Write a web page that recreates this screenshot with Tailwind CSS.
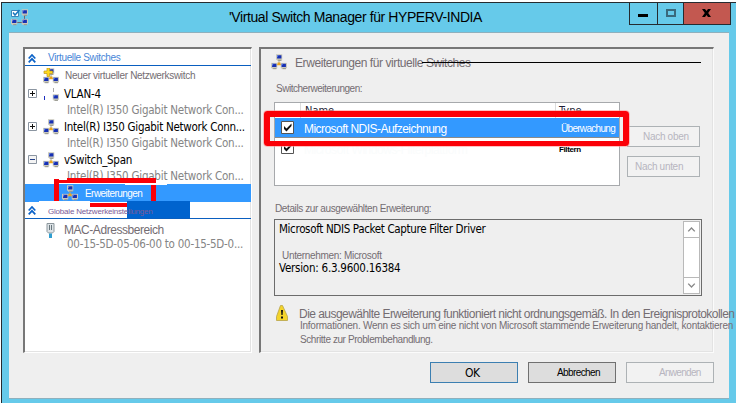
<!DOCTYPE html>
<html lang="de">
<head>
<meta charset="utf-8">
<title>Virtual Switch Manager</title>
<script src="https://cdn.jsdelivr.net/npm/@tailwindcss/browser@4"></script>
</head>
<body class="w-[736px] h-[403px] overflow-hidden bg-white font-['Liberation_Sans',Arial,sans-serif] text-[#746d72] whitespace-nowrap">
<svg class="hidden">
  <defs>
    <symbol id="pc" viewBox="0 0 6 6"><path fill="#c9c8bd" d="M0 0h6v5H0zM1 5h4v1H1z"/><path fill="#1730b4" d="M1 1h4v3H1z"/><path fill="#6a8df0" d="M1 1h1.500L1 3z"/><path fill="#8e8f86" d="M2 5h3v1H2z"/></symbol>
    <symbol id="net" viewBox="0 0 16 16"><path d="M8 6v4" stroke="#a3a89c" fill="none"/><path d="M5.500 10.500h5" stroke="#eba51c" stroke-width="1.500"/><path d="M6.500 8.500h3v1.500h-3z" fill="#eba51c"/><use href="#pc" x="5" y="0" width="6.500" height="7"/><use href="#pc" x="0" y="8.500" width="6.500" height="7"/><use href="#pc" x="9.500" y="8.500" width="6.500" height="7"/></symbol>
    <symbol id="chev" viewBox="0 0 8 9"><path d="M.7 4.500L4 1l3.300 3.500M.7 8.300L4 4.800l3.300 3.500" stroke="#0a62c8" stroke-width="1.700" fill="none"/></symbol>
    <symbol id="check" viewBox="0 0 13 13"><path d="M.5.5h12v12H.5z" fill="#fff" stroke="#555"/><path d="M3 5v3l2.500 2.500L10.500 5V2.500L5.500 7.500z" fill="#111"/></symbol>
    <symbol id="plus" viewBox="0 0 9 9"><path d="M.5.5h8v8h-8z" fill="#fff" stroke="#8b95a1"/><path d="M2 4.500h5M4.500 2v5" stroke="#111"/></symbol>
    <symbol id="minus" viewBox="0 0 9 9"><path d="M.5.5h8v8h-8z" fill="#f4f4f4" stroke="#8b95a1"/><path d="M2 4.500h5" stroke="#24408a"/></symbol>
  </defs>
</svg>
<div class="relative mt-[2px] ml-px w-[735px] h-[401px] border-t border-l border-[#252b30] bg-[#66caea]">
  <!-- title bar -->
  <header class="flex h-[29px] items-start">
    <svg class="ml-[9px] mt-[6px] w-[17px] h-[17px] shrink-0" viewBox="0 0 17 17"><path d="M13.500 5v6M5 13.500h6" stroke="#667" fill="none"/><path d="M.5 1.500h7v6h-7z" fill="#fff" stroke="#3b87b9"/><path d="M2 3.500l2 2.500 4.500-5" fill="none" stroke="#1676bd" stroke-width="1.500"/><use href="#pc" x="10.500" y="0" width="6.500" height="7"/><use href="#pc" x="0" y="9.500" width="6.500" height="7"/><use href="#pc" x="10.500" y="9.500" width="6.500" height="7"/></svg>
    <h1 class="ml-[201px] mt-[5px] w-[400px] text-[14px] leading-[18px] tracking-[-0.4px] text-black">'Virtual Switch Manager für HYPERV-INDIA</h1>
    <div class="flex h-[22px] w-[102px] shrink-0 border border-t-0 border-[#252b30]">
      <div class="w-[28px] border-r border-[#252b30] pl-[8px] pt-[11px]"><div class="h-[3px] w-[10px] bg-black"></div></div>
      <div class="w-[26px] border-r border-[#252b30] pl-[8px] pt-[6px]"><div class="h-[8px] w-[10px] border-2 border-[#39697c]"></div></div>
      <div class="grow bg-[#c35850] pl-[18px] pt-[6px]"><svg class="h-[8px] w-[9px]" viewBox="0 0 9 8"><path d="M0 0h3l1.500 2L6 0h3L6.200 4 9 8H6L4.500 6 3 8H0l2.800-4z"/></svg></div>
    </div>
  </header>
  <main class="ml-[7px] h-[367px] w-[720px] border-t border-b border-[#8eb0bd] bg-[#efefef]">
    <div class="flex pl-[14px] pt-[14px]">
      <!-- navigation tree -->
      <nav class="relative h-[306px] w-[229px] border-l-2 border-t-2 border-r border-b border-l-[#777] border-t-[#777] border-r-white border-b-white bg-white shadow-[inset_-1px_-1px_0_#e3e3e3]">
        <div class="flex h-[17px] border-b border-[#0a5fc0] pl-[3px]">
          <svg class="mt-[5px] h-[9px] w-[8px]"><use href="#chev"/></svg>
          <span class="ml-[12px] mt-[3px] text-[10px] leading-[12px] tracking-[-0.35px] text-[#4685d8]">Virtuelle Switches</span>
        </div>
        <div class="flex h-[17px] pl-[18px]">
          <svg class="mt-[2px] h-[16px] w-[16px] shrink-0" viewBox="0 0 16 16"><use href="#net" width="16" height="16"/><path d="M4 0h2.500v3h3v2.500h-3v3H4v-3H1V3h3z" fill="#ffd91d" stroke="#c0981c" stroke-width=".7"/></svg>
          <span class="ml-[6px] mt-[4px] text-[10px] leading-[12px] tracking-[-0.32px]">Neuer virtueller Netzwerkswitch</span>
        </div>
        <div class="flex h-[17px] pl-[3px]">
          <svg class="mt-[6px] h-[9px] w-[9px]"><use href="#plus"/></svg>
          <svg class="ml-[6px] mt-[4px] h-[16px] w-[16px]" viewBox="0 0 16 16"><path d="M1.500 9v4" stroke="#1c2fc0"/><path d="M10.500 1v4" stroke="#aaa"/><use href="#pc" x="9.500" y="7" width="6.500" height="7"/></svg>
          <span class="ml-[5px] mt-[4px] font-['DejaVu_Sans_Condensed','DejaVu_Sans',sans-serif] text-[11.500px] leading-[15px] tracking-[-0.25px] text-black">VLAN-4</span>
        </div>
        <div class="h-[16px] pl-[42px] pt-[2px] font-['DejaVu_Sans_Condensed','DejaVu_Sans',sans-serif] text-[11.500px] leading-[16px] tracking-[-0.22px] text-[#858585]">Intel(R) I350 Gigabit Network Con...</div>
        <div class="flex h-[17px] pl-[3px]">
          <svg class="mt-[6px] h-[9px] w-[9px]"><use href="#plus"/></svg>
          <svg class="ml-[6px] mt-[3px] h-[16px] w-[16px]"><use href="#net"/></svg>
          <span class="ml-[5px] mt-[4px] font-['DejaVu_Sans_Condensed','DejaVu_Sans',sans-serif] text-[11.500px] leading-[15px] tracking-[-0.28px] text-black">Intel(R) I350 Gigabit Network Conn...</span>
        </div>
        <div class="h-[16px] pl-[42px] pt-[2px] font-['DejaVu_Sans_Condensed','DejaVu_Sans',sans-serif] text-[11.500px] leading-[16px] tracking-[-0.22px] text-[#858585]">Intel(R) I350 Gigabit Network Con...</div>
        <div class="flex h-[17px] pl-[3px]">
          <svg class="mt-[6px] h-[9px] w-[9px]"><use href="#minus"/></svg>
          <svg class="ml-[6px] mt-[3px] h-[16px] w-[16px]"><use href="#net"/></svg>
          <span class="ml-[5px] mt-[4px] font-['DejaVu_Sans_Condensed','DejaVu_Sans',sans-serif] text-[11.500px] leading-[15px] tracking-[-0.3px] text-black">vSwitch_Span</span>
        </div>
        <div class="h-[18px] pl-[42px] pt-[2px] font-['DejaVu_Sans_Condensed','DejaVu_Sans',sans-serif] text-[11.500px] leading-[16px] tracking-[-0.22px] text-[#858585]">Intel(R) I350 Gigabit Network Con...</div>
        <div class="flex h-[18px] bg-[#3399ff] pl-[37px]">
          <svg class="mt-px h-[16px] w-[16px]"><use href="#net"/></svg>
          <span class="ml-[7px] mt-[4px] text-[10px] leading-[12px] tracking-[-0.55px] text-white">Erweiterungen</span>
        </div>
        <div class="flex h-[17px] border-b border-[#0a5fc0] pl-[3px]">
          <svg class="mt-[4px] h-[9px] w-[8px]"><use href="#chev"/></svg>
          <span class="relative z-20 ml-[12px] mt-[4px] text-[8px] leading-[11px] tracking-[-0.2px] text-[#7b5a96]">Globale Netzwerkeinstellungen</span>
        </div>
        <div class="flex h-[19px] pl-[21px]">
          <svg class="mt-[4px] h-[15px] w-[9px]" viewBox="0 0 9 15"><path d="M1 .5h7v8L6.500 10h-4L1 8.500z" fill="#dde3e6" stroke="#8c979d"/><path d="M3.500 2v5M5.500 2v5" stroke="#68757c"/><path d="M3 10.500h3V15H3z" fill="#2f9ed0"/></svg>
          <span class="ml-[9px] mt-[4px] text-[12px] leading-[15px] tracking-[-0.45px]">MAC-Adressbereich</span>
        </div>
        <div class="pl-[42px] font-['DejaVu_Sans_Condensed','DejaVu_Sans',sans-serif] text-[11.500px] leading-[13px] tracking-[-0.25px] text-[#858585]">00-15-5D-05-06-00 to 00-15-5D-0...</div>
        <!-- highlight marks over the selected entry -->
        <div class="absolute left-[29px] top-[130px] h-[23px] w-[5px] bg-[#fb0007]"></div>
        <div class="absolute left-[29px] top-[131px] h-[3px] w-[14px] bg-[#fb0007]"></div>
        <div class="absolute left-[42px] top-[129px] h-[5px] w-[89px] bg-[#fb0007]"></div>
        <div class="absolute left-[126px] top-[129px] h-[24px] w-[5px] bg-[#fb0007]"></div>
        <div class="absolute left-[100px] top-[134px] h-[2px] w-[42px] bg-white"></div>
        <div class="absolute left-[14px] top-[152px] h-[6px] w-[51px] bg-white"></div>
        <div class="absolute left-[65px] top-[154px] h-[4px] w-[38px] bg-[#fb0007]"></div>
        <div class="absolute left-[102px] top-[152px] h-[17px] w-[63px] bg-[#0063ce]"></div>
      </nav>
      <!-- extension details -->
      <section class="relative ml-[7px] h-[306px] w-[455px] border-l-2 border-t-2 border-r border-b border-l-[#777] border-t-[#777] border-r-[#fbfbfb] border-b-[#fbfbfb] shadow-[inset_-1px_-1px_0_#e3e3e3]">
        <div class="flex h-[30px] pl-[10px]">
          <svg class="mt-[5px] h-[16px] w-[16px] shrink-0"><use href="#net"/></svg>
          <span class="ml-[8px] mt-[6px] text-[12px] leading-[16px] tracking-[-0.42px]">Erweiterungen für virtuelle Switches</span>
        </div>
        <div class="absolute left-[161px] top-[13px] h-px w-[279px] bg-black"></div>
        <div class="h-[23px] pl-[15px] pt-[4px] text-[10px] leading-[12px] tracking-[-0.48px]">Switcherweiterungen:</div>
        <div class="flex h-[101px] pl-[13px]">
          <div class="h-[84px] w-[346px] shrink-0 border border-[#a7a9ac] bg-white">
            <div class="flex h-[15px] overflow-hidden font-['DejaVu_Sans_Condensed','DejaVu_Sans',sans-serif] text-[11px] leading-[16px] text-[#1d1d35]">
              <span class="w-[26px] border-r border-[#dcdcdc]"></span><span class="w-[255px] border-r border-[#dcdcdc] pl-[4px]">Name</span><span class="pl-[3px]">Type</span>
            </div>
            <div class="flex h-[20px] border-b border-[#8b8b8b] bg-[#3399ff] text-white">
              <svg class="ml-[6px] mt-[3px] h-[13px] w-[13px] shrink-0"><use href="#check"/></svg>
              <span class="ml-[10px] w-[257px] shrink-0 pt-[4px] text-[12px] leading-[15px] tracking-[-0.55px]">Microsoft NDIS-Aufzeichnung</span>
              <span class="pt-[4px] text-[10px] leading-[13px] tracking-[-0.7px]">Überwachung</span>
            </div>
            <div class="flex h-[20px]">
              <svg class="ml-[6px] mt-[3px] h-[13px] w-[13px] shrink-0"><use href="#check"/></svg>
              <span class="ml-[10px] w-[255px] shrink-0 pt-[5px] text-[12px] leading-[15px] tracking-[-0.45px] text-[#fafcfc]">Microsoft Windows-Filterplattform</span>
              <span class="pt-[6px] text-[8px] font-bold leading-[12px] tracking-[-0.4px] text-black">Filtern</span>
            </div>
          </div>
          <div class="ml-[7px] flex flex-col gap-[9px] pt-[24px] text-[10px] leading-[20px] tracking-[-0.3px] text-[#b7b5bf]">
            <div class="h-[21px] w-[73px] border border-[#adb2b5] bg-[#f2f2f2] pl-[15px]">Nach oben</div>
            <div class="h-[21px] w-[73px] border border-[#adb2b5] bg-[#f2f2f2] pl-[7px]">Nach unten</div>
          </div>
        </div>
        <div class="absolute left-[3px] top-[62px] h-[35px] w-[365px] rounded-[3px] border-[6px] border-b-[5px] border-[#fb0007] outline outline-[#ff9a9a]/60"></div>
        <div class="h-[16px] pl-[14px] text-[10px] leading-[12px] tracking-[-0.39px]">Details zur ausgewählten Erweiterung:</div>
        <div class="ml-[13px] flex h-[77px] w-[428px] justify-between border border-[#6c6c6c] p-px">
          <div class="pl-[3px] text-black">
            <div class="pt-[1px] font-['DejaVu_Sans_Condensed','DejaVu_Sans',sans-serif] text-[11.500px] leading-[15px] tracking-[-0.34px]">Microsoft NDIS Packet Capture Filter Driver</div>
            <div class="pl-[3px] pt-[13px] text-[10px] leading-[12px] tracking-[-0.32px] text-[#746d72]">Unternehmen: Microsoft</div>
            <div class="font-['DejaVu_Sans_Condensed','DejaVu_Sans',sans-serif] text-[11.500px] leading-[13px] tracking-[-0.24px]">Version: 6.3.9600.16384</div>
          </div>
          <div class="flex w-[17px] flex-col justify-between border border-[#b9b9b9] bg-white">
            <svg class="h-[16px] w-[15px] border-b border-[#b9b9b9]" viewBox="0 0 15 16"><path d="M4 10l3.500-3.500L11 10" fill="none" stroke="#888" stroke-width="1.500"/></svg>
            <svg class="h-[16px] w-[15px] border-t border-[#b9b9b9]" viewBox="0 0 15 16"><path d="M4 6l3.500 3.500L11 6" fill="none" stroke="#888" stroke-width="1.500"/></svg>
          </div>
        </div>
        <div class="flex pl-[15px] pt-[9px]">
          <svg class="h-[16px] w-[12px] shrink-0" viewBox="0 0 12 16"><path d="M4.500.5h2l5 11v4H.5v-4z" fill="#f4d42b" stroke="#b8a34a" stroke-width=".8"/><path d="M5 5h2l-.4 5H5.400zM5 11.500h2v2H5z" fill="#111"/></svg>
          <div class="relative z-10 ml-[11px] w-0">
            <div class="pt-[2px] text-[12px] leading-[15px] tracking-[-0.54px]">Die ausgewählte Erweiterung funktioniert nicht ordnungsgemäß. In den Ereignisprotokollen</div>
            <div class="pl-px text-[10px] leading-[8px] tracking-[-0.25px]">Informationen. Wenn es sich um eine nicht von Microsoft stammende Erweiterung handelt, kontaktieren</div>
            <div class="pl-px pt-[3px] text-[10px] leading-[14px] tracking-[-0.42px]">Schritte zur Problembehandlung.</div>
          </div>
        </div>
      </section>
    </div>
    <footer class="flex gap-[10px] pl-[421px] pt-[9px] leading-[20px] text-black">
      <div class="h-[21px] w-[88px] border border-[#3c7fb1] bg-[#ddd] pl-[34px] font-['DejaVu_Sans_Condensed','DejaVu_Sans',sans-serif] text-[12px] tracking-[-0.5px]">OK</div>
      <div class="h-[21px] w-[88px] border border-[#707070] bg-[#ddd] pl-[28px] text-[10px] tracking-[-0.6px]">Abbrechen</div>
      <div class="h-[21px] w-[88px] border border-[#adb2b5] bg-[#f2f2f2] pl-[32px] text-[10px] tracking-[-0.7px] text-[#b7b5bf]">Anwenden</div>
    </footer>
  </main>
</div>
</body>
</html>
